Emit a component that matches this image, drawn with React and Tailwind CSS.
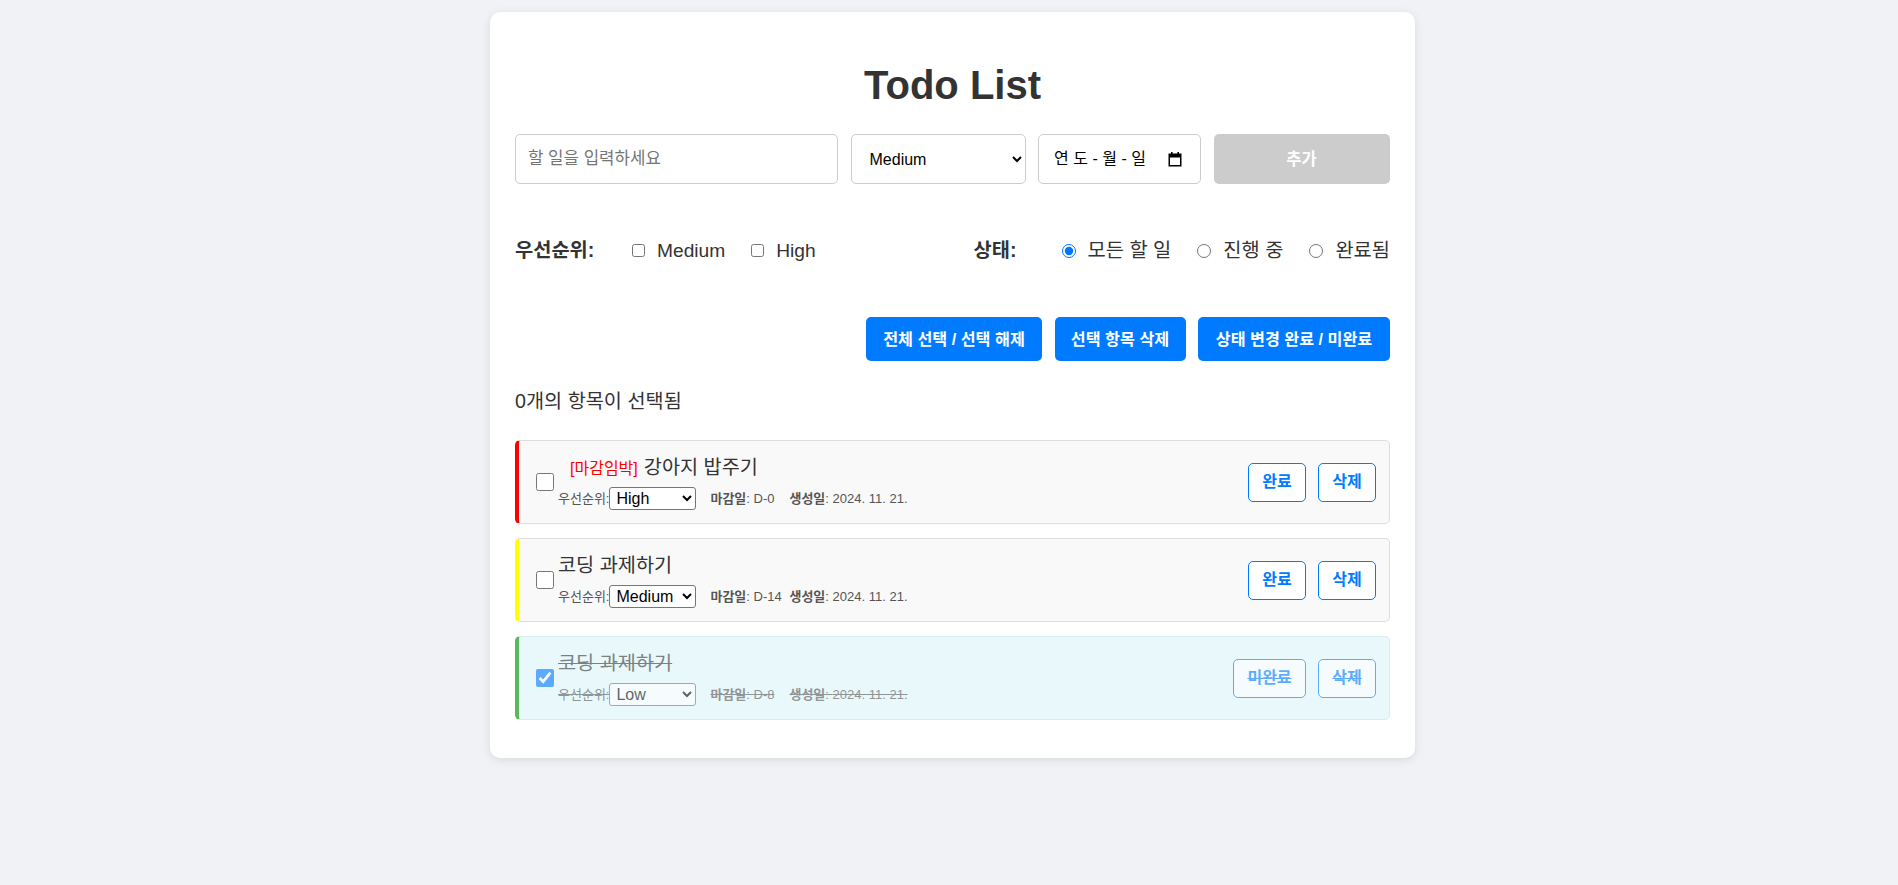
import { useState } from 'react'

const initialTodos = [
  { id: 1, text: '강아지 밥주기', priority: 'High', due: 'D-0', created: '2024. 11. 21.', done: false, urgent: true },
  { id: 2, text: '코딩 과제하기', priority: 'Medium', due: 'D-14', created: '2024. 11. 21.', done: false, urgent: false },
  { id: 3, text: '코딩 과제하기', priority: 'Low', due: 'D-8', created: '2024. 11. 21.', done: true, urgent: false },
]

const borderByPriority = {
  High: 'border-l-[#ff0000]',
  Medium: 'border-l-[#ffff00]',
  Low: 'border-l-[#5cb85c]',
}

function CalendarIcon() {
  return (
    <svg width="14" height="16" viewBox="0 0 14 16" fill="none">
      <rect x="1.25" y="3.25" width="11.5" height="11.5" stroke="#000" strokeWidth="1.5" />
      <rect x="1" y="3" width="12" height="3.5" fill="#000" />
      <rect x="3" y="1" width="1.6" height="3" fill="#000" />
      <rect x="9.4" y="1" width="1.6" height="3" fill="#000" />
    </svg>
  )
}

function TodoItem({ todo, onToggle, onDelete }) {
  const done = todo.done
  const strike = done ? 'line-through decoration-[#007bff]' : ''
  return (
    <div
      className={`flex items-center h-[84px] rounded-[5px] border border-l-4 pl-[13px] pr-[13px] ${borderByPriority[todo.priority]} ${
        done ? 'bg-[#e9f8fa] border-[#d7edf1]' : 'bg-[#f9f9f9] border-[#dddddd]'
      }`}
    >
      <div className={`flex items-center flex-1 min-w-0 ${done ? 'opacity-60' : ''}`}>
        <input type="checkbox" defaultChecked={done} className="w-[18px] h-[18px] ml-[4px] mr-[3px] shrink-0" />
        <div className="flex flex-col ml-[1px]">
          <div className={`h-[27px] leading-[27px] text-[19.7px] text-[#333] whitespace-nowrap ${done ? 'line-through' : ''}`}>
            {todo.urgent && <span className="ml-[12px] mr-[6px] text-[16px] text-[#ff0000]">[마감임박]</span>}
            {todo.text}
          </div>
          <div className="flex items-center h-[23px] mt-[6px] text-[13px] text-[#555] whitespace-nowrap">
            <span className={done ? 'line-through' : ''}>우선순위:</span>
            <select
              defaultValue={todo.priority}
              className="w-[87px] h-[23px] border border-[#767676] rounded-[3px] text-[16px] text-black bg-white pl-[2px]"
            >
              <option>Low</option>
              <option>Medium</option>
              <option>High</option>
            </select>
            <span className={`ml-[14px] w-[79px] ${done ? 'line-through' : ''}`}>
              <span className="font-semibold">마감일</span>: {todo.due}
            </span>
            <span className={done ? 'line-through' : ''}>
              <span className="font-semibold">생성일</span>: {todo.created}
            </span>
          </div>
        </div>
      </div>
      <div className={`flex items-center gap-[12px] ${done ? 'opacity-60' : ''}`}>
        <button
          onClick={onToggle}
          className={`h-[39px] ${done ? 'w-[73px]' : 'w-[58px]'} rounded-[5px] border border-[#007bff] bg-white text-[#007bff] text-[16px] font-bold`}
        >
          <span className={strike}>{done ? '미완료' : '완료'}</span>
        </button>
        <button
          onClick={onDelete}
          className="h-[39px] w-[58px] rounded-[5px] border border-[#007bff] bg-white text-[#007bff] text-[16px] font-bold"
        >
          <span className={strike}>삭제</span>
        </button>
      </div>
    </div>
  )
}

export default function App() {
  const [todos, setTodos] = useState(initialTodos)
  const [text, setText] = useState('')
  const [status, setStatus] = useState('all')

  const toggle = id => setTodos(ts => ts.map(t => (t.id === id ? { ...t, done: !t.done } : t)))
  const remove = id => setTodos(ts => ts.filter(t => t.id !== id))

  return (
    <div className="min-h-screen bg-[#f0f2f5] pt-[12px] pl-[7px] font-['Liberation_Sans','Noto_Sans_CJK_KR',sans-serif] text-[#333]">
      <div className="mx-auto w-[925px] bg-white rounded-[10px] shadow-[0_2px_10px_rgba(0,0,0,0.1)] px-[25px] pt-[25px] pb-[38px]">
        <h1 className="mt-[24px] h-[48px] leading-[48px] text-center text-[40px] font-bold text-[#333]">Todo List</h1>

        {/* Add form */}
        <div className="flex gap-[12.5px] mt-[25px] h-[50px]">
          <input
            value={text}
            onChange={e => setText(e.target.value)}
            placeholder="할 일을 입력하세요"
            className="w-[323px] h-[50px] border border-[#cccccc] rounded-[5px] px-[12px] text-[16.8px] placeholder:text-[#757575] outline-none"
          />
          <select
            defaultValue="Medium"
            className="w-[175px] h-[50px] border border-[#cccccc] rounded-[5px] pl-[14px] pr-[8px] text-[16px] text-black bg-white"
          >
            <option>Low</option>
            <option>Medium</option>
            <option>High</option>
          </select>
          <div className="w-[163px] h-[50px] border border-[#cccccc] rounded-[5px] pl-[15px] pr-[18px] flex items-center justify-between text-[16px] text-black">
            <span className="tracking-[4.5px]">연도-월-일</span>
            <CalendarIcon />
          </div>
          <button disabled className="w-[176px] h-[50px] rounded-[5px] bg-[#cccccc] text-white text-[16.5px] font-bold">
            추가
          </button>
        </div>

        {/* Filters */}
        <div className="flex items-center justify-between mt-[52px] h-[29px] leading-[29px] text-[19.2px]">
          <div className="flex items-center">
            <span className="font-bold w-[113px] text-[19.8px]">우선순위:</span>
            <label className="flex items-center mr-[26px]">
              <input type="checkbox" className="w-[13px] h-[13px] ml-[4px] mr-[12px]" />
              Medium
            </label>
            <label className="flex items-center">
              <input type="checkbox" className="w-[13px] h-[13px] mr-[12px]" />
              High
            </label>
          </div>
          <div className="flex items-center text-[19.8px]">
            <span className="font-bold w-[88px]">상태:</span>
            {[
              ['all', '모든 할 일'],
              ['active', '진행 중'],
              ['done', '완료됨'],
            ].map(([v, label], i) => (
              <label key={v} className={`flex items-center ${i > 0 ? 'ml-[26px]' : ''}`}>
                <input
                  type="radio"
                  name="status"
                  checked={status === v}
                  onChange={() => setStatus(v)}
                  className="w-[14px] h-[14px] mr-[12px]"
                />
                {label}
              </label>
            ))}
          </div>
        </div>

        {/* Bulk actions */}
        <div className="flex justify-end gap-[12.5px] mt-[52px]">
          <button className="w-[176px] h-[44px] rounded-[5px] bg-[#007bff] text-white text-[16.2px] font-bold">전체 선택 / 선택 해제</button>
          <button className="w-[131px] h-[44px] rounded-[5px] bg-[#007bff] text-white text-[16.2px] font-bold">선택 항목 삭제</button>
          <button className="w-[192px] h-[44px] rounded-[5px] bg-[#007bff] text-white text-[16.2px] font-bold">상태 변경 완료 / 미완료</button>
        </div>

        <p className="mt-[27px] leading-[27px] text-[19.7px] text-[#333]">0개의 항목이 선택됨</p>

        <div className="flex flex-col gap-[14px] mt-[25px]">
          {todos.map(t => (
            <TodoItem key={t.id} todo={t} onToggle={() => toggle(t.id)} onDelete={() => remove(t.id)} />
          ))}
        </div>
      </div>
    </div>
  )
}
